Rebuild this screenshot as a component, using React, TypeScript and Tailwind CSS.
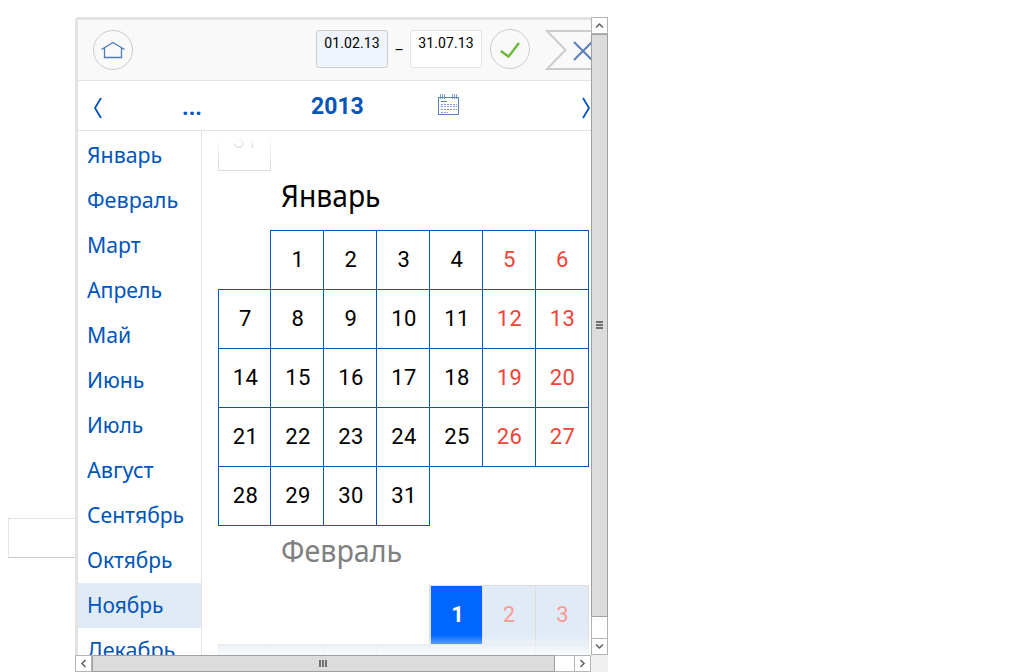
import React from "react";

const months: [string, string][] = [
  ["Январь", "scale-x-[0.97]"],
  ["Февраль", "scale-x-[0.98]"],
  ["Март", "scale-x-[0.965]"],
  ["Апрель", "scale-x-[0.965]"],
  ["Май", "scale-x-[0.965]"],
  ["Июнь", "scale-x-[0.96]"],
  ["Июль", "scale-x-[0.95]"],
  ["Август", "scale-x-[0.985]"],
  ["Сентябрь", "scale-x-[0.96]"],
  ["Октябрь", "scale-x-[0.95]"],
  ["Ноябрь", "scale-x-[0.95]"],
  ["Декабрь", "scale-x-[0.98]"],
];

const january = Array.from({ length: 31 }, (_, i) => i + 1);

function MonthList() {
  return (
    <nav className="w-[124px] shrink-0 overflow-hidden border-r border-[#e3e3e3] pt-[2px]">
      {months.map(([name, scale]) => (
        <div
          key={name}
          className={`flex h-[45px] pl-[9px] text-[22px] leading-[43px] text-[#0055bb] ${
            name === "Ноябрь" ? "-mr-px bg-[#e1ebf5]" : ""
          }`}
        >
          <span className={`inline-block origin-left whitespace-nowrap font-['Noto_Sans',sans-serif] ${scale}`}>{name}</span>
        </div>
      ))}
    </nav>
  );
}

function Cell({ day, first }: { day: number; first?: boolean }) {
  const weekend = day % 7 === 5 || day % 7 === 6;
  return (
    <div
      className={`-mb-px -mr-px flex items-center justify-center border border-[#0055bb] text-[22px] leading-none tracking-[0.5px] ${
        weekend ? "pl-px text-[#f04438]" : "pl-[2px] text-black"
      } ${first ? "col-start-2" : ""}`}
    >
      {day}
    </div>
  );
}

function Calendar() {
  return (
    <div className="relative flex-1 overflow-hidden pl-4">
      <div className="flex h-10 w-[53px] justify-center border border-t-0 border-[#dddddd] pl-[2px] text-[22px] leading-[20px] tracking-[0.5px] text-[#bbbbbb]">31</div>
      <h2 className="h-[59px] pl-[63px] text-[31px] leading-[48px] text-black">
        <span className="inline-block origin-left scale-x-[0.91] font-['Noto_Sans',sans-serif]">Январь</span>
      </h2>
      <div className="grid w-[370px] auto-rows-[59px] grid-cols-[52px_repeat(6,53px)]">
        {january.map((d) => (
          <Cell key={d} day={d} first={d === 1} />
        ))}
      </div>
      <h2 className="h-[60px] pl-[63px] text-[31px] leading-[51px] text-[#808080]">
        <span className="inline-block origin-left scale-x-[0.925] font-['Noto_Sans',sans-serif]">Февраль</span>
      </h2>
      <div className="grid w-[370px] auto-rows-[59px] grid-cols-[52px_repeat(6,53px)] text-[22px] leading-none">
        <div className="col-start-5 -mb-px -mr-px flex items-center justify-center border border-l-2 border-[#dddddd] bg-[#0066ff] bg-clip-padding pl-[2px] font-bold text-white">1</div>
        <div className="-mb-px -mr-px flex items-center justify-center border border-[#dddddd] bg-[#e1ebf5] text-[#fa9a95]">2</div>
        <div className="-mb-px -mr-px flex items-center justify-center border border-[#dddddd] bg-[#e1ebf5] pl-px text-[#fa9a95]">3</div>
        {[4, 5, 6, 7, 8, 9, 10].map((d) => (
          <div key={d} className="-mb-px -mr-px border border-[#dddddd] bg-[#e1ebf5]" />
        ))}
      </div>
      <div className="absolute inset-x-0 top-0 h-[32px] bg-linear-to-b from-white from-20% to-white/0" />
      <div className="absolute inset-x-0 bottom-0 h-[20px] bg-linear-to-t from-white/80 to-white/0" />
    </div>
  );
}

function Header() {
  return (
    <div className="flex h-[61px] shrink-0 items-start overflow-hidden border-b border-[#e3e3e3] bg-[#f9f9f9] pl-[15px] text-[14px]">
      <div className="mt-[10px] flex size-10 shrink-0 items-center justify-center rounded-full border border-[#cccccc]">
        <svg width="26" height="20" viewBox="0 0 26 20" fill="none" stroke="#4f7abc" strokeWidth="1.3">
          <path d="M1.5 9.5 13 2.5 24.5 9.5M4.500 8v9.500h17V8" />
        </svg>
      </div>
      <div className="ml-[183px] mt-[10px] h-[38px] w-[72px] shrink-0 rounded-[3px] border border-[#cccccc] bg-[#eef3fc] text-center leading-[25px] tracking-[0.1px]">01.02.13</div>
      <div className="w-[22px] shrink-0 pt-[20px] text-center leading-[21px]">–</div>
      <div className="mt-[10px] h-[38px] w-[72px] shrink-0 rounded-[3px] border border-[#e3e3e3] bg-white text-center leading-[25px] tracking-[0.1px]">31.07.13</div>
      <div className="ml-2 mt-[9px] flex size-10 shrink-0 items-center justify-center rounded-full border border-[#cccccc]">
        <svg width="24" height="24" viewBox="0 0 24 24" fill="none" stroke="#6cba38" strokeWidth="2.4">
          <path d="M2.800 14 10.500 19.500 21 6" />
        </svg>
      </div>
      <svg className="ml-[14px] mt-[10px] shrink-0" width="50" height="40" viewBox="0 0 50 40" fill="none">
        <path d="M50 1H3L21.5 20 3 39H50" stroke="#cccccc" strokeWidth="2" />
        <path d="m30 12 18 18M30 30 48 12" stroke="#5b80bc" strokeWidth="2" />
      </svg>
    </div>
  );
}

function YearBar() {
  return (
    <div className="flex h-[50px] shrink-0 items-center border-b border-[#e3e3e3] text-[#0055bb]">
      <svg className="ml-[14px] mt-[5px]" width="12" height="24" viewBox="0 0 12 24" fill="none" stroke="currentColor" strokeWidth="1.8">
        <path d="M9 2 3 12l6 10" />
      </svg>
      <span className="ml-[78px] mt-[3px] w-[20px] text-[23px] font-bold leading-none">...</span>
      <span className="ml-[109px] mt-[2px] w-[54px] text-[23px] font-bold leading-none">2013</span>
      <svg className="-mt-[3px] ml-[72px]" width="24" height="24" viewBox="0 0 24 24" fill="none" stroke="#5b80bc" shapeRendering="crispEdges">
        <path d="M1.500 5.500h20v17h-20z" />
        <path d="M3.500 2v5M5.500 2v5M7.500 2v5M15.500 2v5M17.500 2v5M19.500 2v5" strokeOpacity=".75" />
        <path d="M4 9.500h6" />
        <path d="M4 12.500h16M4 14.500h16M4 17.500h16M4 20.500h7" strokeDasharray="2 1" strokeOpacity=".8" />
      </svg>
      <svg className="ml-auto mt-[5px]" width="12" height="24" viewBox="0 0 12 24" fill="none" stroke="currentColor" strokeWidth="1.8">
        <path d="m4 2 6 10-6 10" />
      </svg>
    </div>
  );
}

function Arrow({ d }: { d: string }) {
  return (
    <div className="flex size-[17px] shrink-0 items-center justify-center border border-[#b4b4b4] bg-white">
      <svg width="9" height="9" viewBox="0 0 9 9" fill="none" stroke="#606060" strokeWidth="1.5">
        <path d={d} />
      </svg>
    </div>
  );
}

export default function App() {
  return (
    <div className="flex h-[672px] w-[1010px] overflow-hidden bg-white font-[Roboto,sans-serif] text-black">
      <div className="w-[75px] shrink-0 pl-2 pt-[518px]">
        <div className="h-10 border border-r-0 border-[#e3e3e3] border-b-[#cccccc]" />
      </div>
      <div className="w-[533px] pt-[17px]">
        <div className="flex h-[638px]">
          <div className="flex w-[516px] flex-col overflow-hidden rounded-tl-[4px] border-l-[3px] border-t-[3px] border-[#e3e3e3]">
            <Header />
            <YearBar />
            <div className="flex min-h-0 flex-1">
              <MonthList />
              <Calendar />
            </div>
          </div>
          <div className="flex w-[17px] flex-col border-x border-[#b4b4b4]">
            <div className="-mx-px"><Arrow d="M1 6.500 4.500 3 8 6.500" /></div>
            <div className="-mx-px flex h-[583px] flex-col items-center justify-center gap-px border border-[#a0a0a0] bg-[#dcdcdc] pb-px">
              <i className="h-[2px] w-[7px] bg-[#707070]" />
              <i className="h-[2px] w-[7px] bg-[#707070]" />
              <i className="h-[2px] w-[7px] bg-[#707070]" />
            </div>
            <div className="-mx-px mt-auto"><Arrow d="M1 2.500 4.500 6 8 2.500" /></div>
          </div>
        </div>
        <div className="flex h-[17px] bg-[#efefef]">
          <div className="flex w-[516px] border-y border-[#b4b4b4] bg-white">
            <div className="-my-px"><Arrow d="M6.500 1 3 4.500 6.500 8" /></div>
            <div className="-my-px flex h-[17px] w-[463px] items-center justify-center gap-px border border-[#a0a0a0] bg-[#dcdcdc] pr-[2px]">
              <i className="h-[7px] w-[2px] bg-[#707070]" />
              <i className="h-[7px] w-[2px] bg-[#707070]" />
              <i className="h-[7px] w-[2px] bg-[#707070]" />
            </div>
            <div className="-my-px ml-auto"><Arrow d="M2.500 1 6 4.500 2.500 8" /></div>
          </div>
        </div>
      </div>
    </div>
  );
}
